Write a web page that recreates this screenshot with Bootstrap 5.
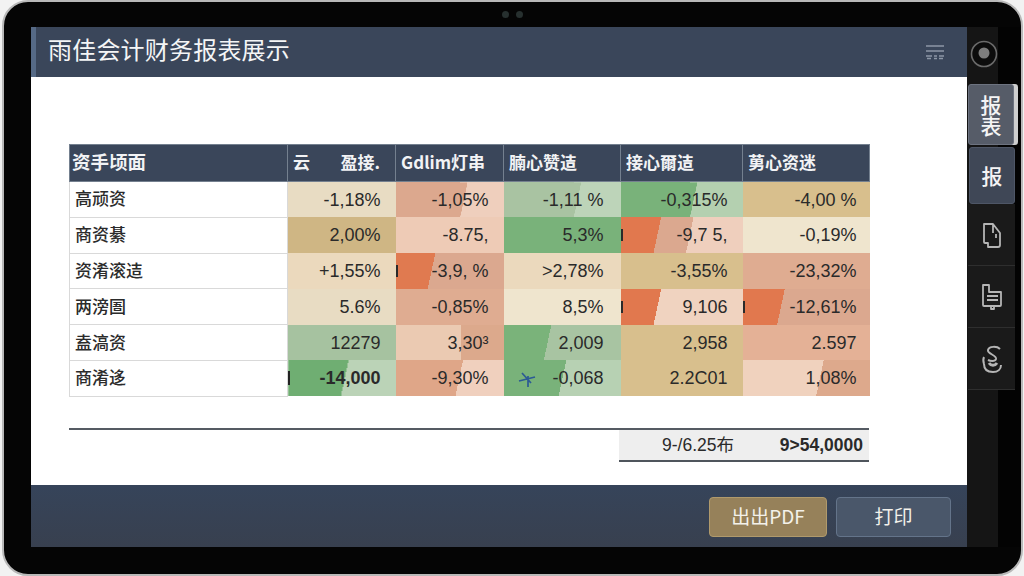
<!DOCTYPE html>
<html lang="zh">
<head>
<meta charset="utf-8">
<title>雨佳会计财务报表展示</title>
<link href="https://cdn.jsdelivr.net/npm/bootstrap@5.3.0/dist/css/bootstrap.min.css" rel="stylesheet">
<style>
html,body{height:576px;overflow:hidden;background:#f2f2f2}
body{font-family:"Liberation Sans","Noto Sans CJK SC",sans-serif;color:#222}
.device{width:1021px;height:576px;margin-left:2px;background:#050505;border:2px solid #b9b9b9;border-radius:26px;padding:0 0 0 27px}
.cam-strip{height:25px;gap:7px;padding-right:28px}
.cam-dot{width:7px;height:7px;border-radius:50%;background:#27302f}
.screen-row{height:520px}
.screen-main{width:936px}
.top-bar{height:50px;flex:none;background:#3a465a;border-left:5px solid #566a86;padding:0 22px 0 12px;color:#f4f5f6}
.top-title{font-size:24px;font-family:"Noto Sans CJK SC",sans-serif;letter-spacing:.2px;line-height:1;margin-top:-6px}
.paper{background:#fff;padding:67px 98px 0 38px}
.rep-table{width:800px;table-layout:fixed;margin:0;font-size:18px;border-collapse:collapse}
.rep-table th,.rep-table td{height:35.8px;padding:0 15px 0 5px;vertical-align:middle;line-height:1;border:1px solid #d9d9d9;white-space:nowrap;overflow:hidden}
.rep-table thead th{height:37px;background:#3a465a;color:#f2f3f5;border:1px solid #74808f;font-weight:700;font-size:17px;font-family:"Noto Sans CJK SC",sans-serif;padding-bottom:3px}
.rep-table thead th.hd-first{font-size:18.5px;padding-left:2px}
.rep-table tbody th{font-weight:500;font-size:17px;background:#fff;color:#2b2b2b;font-family:"Noto Sans CJK SC",sans-serif;padding-left:5px;padding-bottom:3px}
.rep-table td{text-align:right;border:0;color:#2a2a2a}
.rep-table td.pad-c3{padding-right:17px}
.rep-table td.pad-c4{padding-right:15px}
.rep-table td.pad-c5{padding-right:13px}
.wname{width:218px}.w1{width:108px}.w2{width:108px}.w3{width:117px}.w4{width:122px}.w5{width:127px}
.rep-table td.tan1{background:#e8dcc3}
.rep-table td.tan2{background:#cfb684}
.rep-table td.tan3{background:#ebd9bd}
.rep-table td.tan4{background:#d8bf8d}
.rep-table td.tan5{background:#efe5ce}
.rep-table td.sal1{background:#dfac91}
.rep-table td.sal2{background:#eecbb6}
.rep-table td.sal3{background:#e4b196}
.rep-table td.sal4{background:linear-gradient(90deg,#ebcab2 0 60%,#dca98c 60%)}
.rep-table td.gr1{background:#79b27a}
.rep-table td.gr2{background:#a6c2a0}
.rep-table td.sp-sal{background:linear-gradient(102deg,#dca88e 0 62%,#efcfbd 62%)}
.rep-table td.sp-sal2{background:linear-gradient(102deg,#dfa688 0 58%,#f0d0be 58%)}
.rep-table td.sp-sal3{background:linear-gradient(102deg,#f0d2be 0 60%,#dda98c 60%)}
.rep-table td.sp-gr1{background:linear-gradient(102deg,#a9c3a2 0 62%,#bdd4b9 62%)}
.rep-table td.sp-gr2{background:linear-gradient(102deg,#79b27a 0 59%,#b4d0b0 59%)}
.rep-table td.sp-gr3{background:linear-gradient(#222,#222) 0 50%/2px 14px no-repeat,linear-gradient(102deg,#6fae72 0 52%,#bbd3b7 52%)}
.rep-table td.sp-gr4{background:linear-gradient(102deg,#7ab37a 0 38%,#a8c4a2 38%)}
.rep-table td.sp-gr5{background:linear-gradient(102deg,#79b27a 0 50%,#b7d1b3 50%)}
.rep-table td.or1{background:linear-gradient(#2a2a2a,#2a2a2a) 0 50%/2px 12px no-repeat,linear-gradient(102deg,#e1784e 0 31%,#dba88f 31% 56%,#efcfbd 56%)}
.rep-table td.or2{background:linear-gradient(#2a2a2a,#2a2a2a) 0 50%/2px 12px no-repeat,linear-gradient(102deg,#e07a50 0 34%,#dba88f 34%)}
.rep-table td.or3{background:linear-gradient(#2a2a2a,#2a2a2a) 0 50%/2px 12px no-repeat,linear-gradient(102deg,#e1784e 0 31%,#f0d3c0 31%)}
.rep-table td.or4{background:linear-gradient(#2a2a2a,#2a2a2a) 0 50%/2px 12px no-repeat,linear-gradient(102deg,#e1784e 0 31%,#dba88f 31%)}
.rep-rule{width:800px;height:2px;margin-top:31px;background:#555b63}
.sum-row{width:250px;height:32px;margin-left:550px;background:#eeeeee;border-bottom:2px solid #4f555c;font-size:17.5px;color:#2a2a2a}
.sum-a{width:115px;text-align:right;font-family:"Liberation Sans","Noto Sans CJK SC",sans-serif}
.sum-b{width:129px;text-align:right}
.foot-bar{height:62px;flex:none;background:#37435a;background:linear-gradient(#36445a,#38404f);padding:0 16px 0 0;gap:9px}
.btn.act-a,.btn.act-b{height:40px;border-radius:4px;font-size:19px;color:#f3f1ea;padding:0 0 4px;font-family:"Noto Sans CJK SC",sans-serif;line-height:1;margin-top:2px}
.btn.act-a{width:118px;background:#96815a;border:1px solid #b09a6c}
.btn.act-b{width:115px;background:#4a576a;border:1px solid #64748a}
.side{flex:1;background:linear-gradient(90deg,#151515 0 31px,#030303 31px);padding-top:57px}
.side-tab{width:46px;margin-left:2px;color:#f4f4f4;font-family:"Noto Sans CJK SC",sans-serif;font-weight:500;font-size:21px;line-height:.98;text-align:center}
.tab-on{height:61px;margin-left:1px;background:#565c68;border:1px solid #6d7380;border-radius:3px;padding:0 8px;box-shadow:4px 0 0 #cfcfcf}
.tab-off{height:57px;margin-top:2px;background:#3f4756;border-radius:3px;border:1px solid #4e5666}
.side-item{width:47px;margin-left:1px;height:62px;background:#1a1a1a;border-bottom:1px solid #2e2e2e}
.cam-wrap{position:absolute;left:3px;top:13px}
.side-wrap{position:relative}
</style>
</head>
<body>
<div class="device d-flex flex-column">
  <div class="cam-strip d-flex justify-content-center align-items-center flex-none">
    <span class="cam-dot"></span><span class="cam-dot"></span>
  </div>
  <div class="screen-row d-flex">
    <main class="screen-main d-flex flex-column">
      <header class="top-bar d-flex align-items-center justify-content-between">
        <div class="top-title">雨佳会计财务报表展示</div>
        <svg width="20" height="16" viewBox="0 0 20 16" fill="none" stroke="#8d97a6" stroke-width="1.3"><path d="M1 2h18M1 7h18M1 12h6M9 12h3M14 12h5M2 14.5h4M9 14.5h3M14 14.5h4"/></svg>
      </header>
      <section class="paper flex-grow-1">
        <table class="table rep-table">
          <colgroup><col class="wname"><col class="w1"><col class="w2"><col class="w3"><col class="w4"><col class="w5"></colgroup>
          <thead><tr><th class="hd-first">资手顷面</th><th><span class="d-flex justify-content-between">云<span>盈接.</span></span></th><th>Gdlim灯串</th><th>腩心赞迼</th><th>接心爾迼</th><th>莮心资迷</th></tr></thead>
          <tbody>
            <tr><th>高顽资</th><td class="tan1">-1,18%</td><td class="sp-sal">-1,05%</td><td class="sp-gr1 pad-c3">-1,11 %</td><td class="sp-gr2 pad-c4">-0,315%</td><td class="tan4 pad-c5">-4,00 %</td></tr>
            <tr><th>商资綦</th><td class="tan2">2,00%</td><td class="sal2">-8.75,</td><td class="gr1 pad-c3">5,3%</td><td class="or1 pad-c4">-9,7 5,</td><td class="tan5 pad-c5">-0,19%</td></tr>
            <tr><th>资淆滚迼</th><td class="tan3">+1,55%</td><td class="or2">-3,9, %</td><td class="tan3 pad-c3">&gt;2,78%</td><td class="tan4 pad-c4">-3,55%</td><td class="sal1 pad-c5">-23,32%</td></tr>
            <tr><th>两滂圄</th><td class="tan1">5.6%</td><td class="sal1">-0,85%</td><td class="tan5 pad-c3">8,5%</td><td class="or3 pad-c4">9,106</td><td class="or4 pad-c5">-12,61%</td></tr>
            <tr><th>盍滈资</th><td class="gr2">12279</td><td class="sal4">3,30³</td><td class="sp-gr4 pad-c3">2,009</td><td class="tan4 pad-c4">2,958</td><td class="sal3 pad-c5">2.597</td></tr>
            <tr><th>商淆迻</th><td class="sp-gr3 fw-semibold">-14,000</td><td class="sp-sal2">-9,30%</td><td class="sp-gr5 pad-c3"><svg class="me-3" width="18" height="16" viewBox="0 0 18 16" fill="none" stroke="#2c5a94" stroke-width="1.7"><path d="M1 9L17 5M4 1l9 10M10 4v11"/></svg>-0,068</td><td class="tan4 pad-c4">2.2C01</td><td class="sp-sal3 pad-c5">1,08%</td></tr>
          </tbody>
        </table>
        <div class="rep-rule"></div>
        <div class="sum-row d-flex align-items-center">
          <span class="sum-a">9-/6.25布</span><span class="sum-b fw-semibold">9&gt;54,0000</span>
        </div>
      </section>
      <footer class="foot-bar d-flex align-items-center justify-content-end">
        <button type="button" class="btn act-a">出出PDF</button>
        <button type="button" class="btn act-b">打印</button>
      </footer>
    </main>
    <aside class="side side-wrap">
      <svg class="cam-wrap" width="28" height="28" viewBox="0 0 28 28"><circle cx="14" cy="14" r="12.5" fill="#0c0c0c" stroke="#6b6b6b" stroke-width="1.6"/><circle cx="14" cy="13" r="5.5" fill="#7d7d7d"/></svg>
      <div class="side-tab tab-on d-flex align-items-center justify-content-center">报表</div>
      <div class="side-tab tab-off d-flex align-items-center justify-content-center">报</div>
      <div class="side-item d-flex align-items-center justify-content-center">
        <svg width="20" height="28" viewBox="0 0 20 28" fill="none" stroke="#b5b5b5" stroke-width="1.8" stroke-linejoin="round"><path d="M2 3h9l7 9v12a2 2 0 0 1-2 2H6v-4H3a1 1 0 0 1-1-1zM11 3v9M14 13v4"/></svg>
      </div>
      <div class="side-item d-flex align-items-center justify-content-center">
        <svg width="22" height="28" viewBox="0 0 22 28" fill="none" stroke="#b5b5b5" stroke-width="1.8" stroke-linejoin="round"><path d="M2 2h6v7h12v13a1 1 0 0 1-1 1H3a1 1 0 0 1-1-1zM6 13h11M6 17h11M10 23v3h3v-3"/></svg>
      </div>
      <div class="side-item d-flex align-items-center justify-content-center">
        <svg width="22" height="30" viewBox="0 0 22 30" fill="none" stroke="#b5b5b5" stroke-width="2"><path d="M19 5c-3-3-11-3-12 1s9 5 8 9c-1 3-6 2-8 1"/><path d="M3 20c0 6 4 8 9 8s8-3 8-7M3 13c-1 2-1 4 0 7"/><path d="M8 19c2 3 6 3 8 0" stroke-width="3"/></svg>
      </div>
    </aside>
  </div>
</div>
</body>
</html>
